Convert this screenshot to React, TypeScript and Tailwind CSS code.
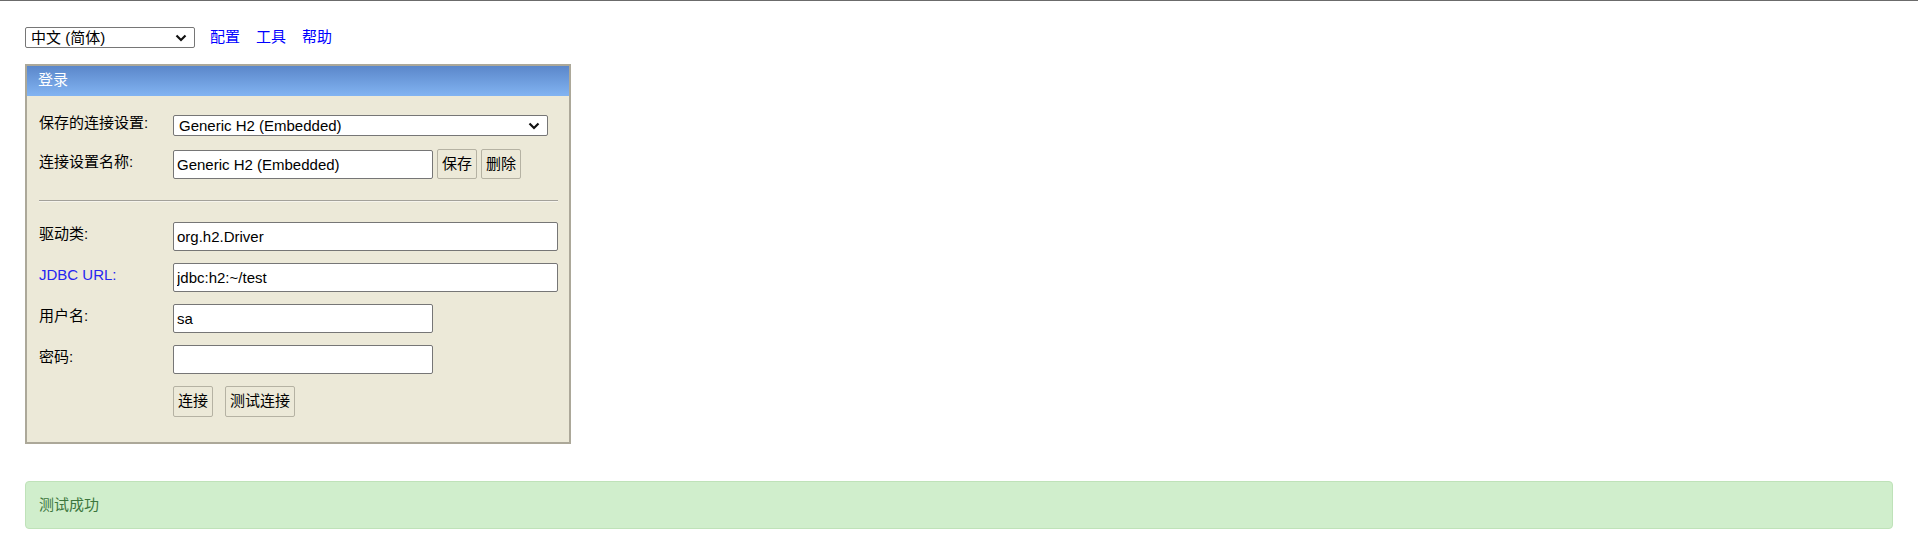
import React from "react";

const font = { fontFamily: '"Liberation Sans", "Noto Sans CJK SC", sans-serif' };

function Chevron() {
  return (
    <svg width="12" height="8" viewBox="0 0 12 8" className="absolute right-[7px] top-1/2 -translate-y-1/2 pointer-events-none">
      <path d="M1.5 1.5 L6 6 L10.5 1.5" fill="none" stroke="#111" strokeWidth="2.2" />
    </svg>
  );
}

function FakeSelect({ value, w, h }: { value: string; w: string; h: string }) {
  return (
    <div className={`relative ${w} ${h} bg-white border border-[#767676] rounded-[2px] flex items-center pl-[5px] text-[15px] leading-none text-black`}>
      <span>{value}</span>
      <Chevron />
    </div>
  );
}

function Field({ value, w }: { value: string; w: string }) {
  return (
    <input
      readOnly
      value={value}
      className={`${w} h-[29px] bg-white border border-[#767676] rounded-[2px] px-[3px] text-[15px] text-black outline-none`}
    />
  );
}

function Btn({ children, w, h }: { children: React.ReactNode; w: string; h: string }) {
  return (
    <button className={`${w} ${h} border border-[#b5b2a3] rounded-[2px] bg-[#ece9d8] text-[15px] text-black flex items-center justify-center`}>
      {children}
    </button>
  );
}

function Row({ label, blue, children }: { label: string; blue?: boolean; children: React.ReactNode }) {
  return (
    <div className="flex items-center">
      <div className={`w-[134px] text-[15px] -mt-[4px] ${blue ? "text-[#2626f0]" : "text-black"}`}>{label}</div>
      {children}
    </div>
  );
}

export default function App() {
  return (
    <div className="min-h-[544px] bg-white border-t border-[#6b6b6b]" style={font}>
      <div className="pl-[25px] pr-[25px]">
        <div className="flex items-center pt-[26px] h-[47px]">
          <FakeSelect value="中文 (简体)" w="w-[170px]" h="h-[21px]" />
          <div className="flex gap-[16px] ml-[15px] text-[15px] text-[#0000ff]">
            <a>配置</a>
            <a>工具</a>
            <a>帮助</a>
          </div>
        </div>

        <div className="mt-[16px] w-[546px] border-2 border-[#aca899] bg-[#ece9d8]">
          <div className="h-[30px] bg-gradient-to-b from-[#5b87ca] to-[#82b4f2] text-white text-[15px] flex items-center pl-[11px]">
            <span className="-mt-[2px]">登录</span>
          </div>
          <div className="pl-[12px] pr-[11px] pt-[19px] pb-[25px]">
            <Row label="保存的连接设置:">
              <FakeSelect value="Generic H2 (Embedded)" w="w-[375px]" h="h-[21px]" />
            </Row>
            <div className="mt-[13px]">
              <Row label="连接设置名称:">
                <div className="flex items-center gap-[4px]">
                  <Field value="Generic H2 (Embedded)" w="w-[260px]" />
                  <Btn w="w-[40px]" h="h-[30px]">保存</Btn>
                  <Btn w="w-[40px]" h="h-[30px]">删除</Btn>
                </div>
              </Row>
            </div>
            <div className="mt-[21px] border-t border-[#a3a19a] border-b border-b-[#f6f4ec]" />
            <div className="mt-[20px] flex flex-col gap-[12px]">
              <Row label="驱动类:">
                <Field value="org.h2.Driver" w="w-[385px]" />
              </Row>
              <Row label="JDBC URL:" blue>
                <Field value="jdbc:h2:~/test" w="w-[385px]" />
              </Row>
              <Row label="用户名:">
                <Field value="sa" w="w-[260px]" />
              </Row>
              <Row label="密码:">
                <Field value="" w="w-[260px]" />
              </Row>
            </div>
            <div className="mt-[12px] flex gap-[12px] pl-[134px]">
              <Btn w="w-[40px]" h="h-[31px]">连接</Btn>
              <Btn w="w-[70px]" h="h-[31px]">测试连接</Btn>
            </div>
          </div>
        </div>

        <div className="mt-[37px] h-[48px] rounded-[4px] border border-[#bfe2b9] bg-[#d0eecc] flex items-center pl-[13px] text-[15px] text-[#3c763d]">
          测试成功
        </div>
      </div>
    </div>
  );
}
